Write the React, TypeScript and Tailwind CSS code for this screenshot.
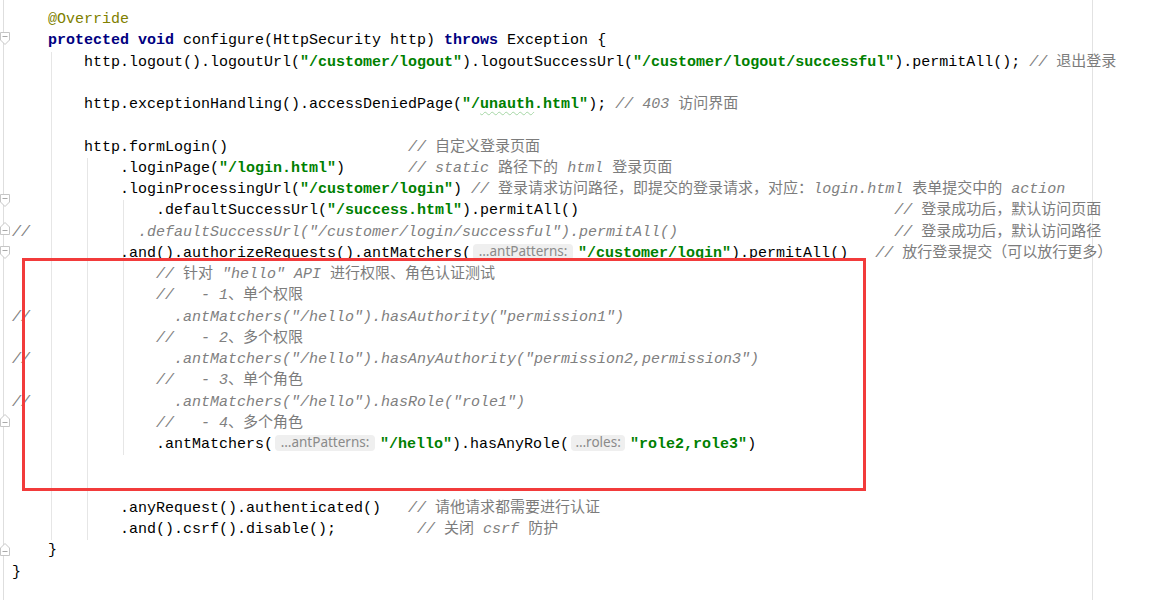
import React from 'react'

type Seg = [string, string, number?]

const CJK = /([\u3000-\u303f\u4e00-\u9fff\uff00-\uffef]+)/

const LINES: Seg[][] = [
  [['p', '    '], ['a', '@Override']],
  [['p', '    '], ['k', 'protected void'], ['p', ' configure(HttpSecurity http) '], ['k', 'throws'], ['p', ' Exception {']],
  [['p', '        http.logout().logoutUrl('], ['s', '"/customer/logout"'], ['p', ').logoutSuccessUrl('], ['s', '"/customer/logout/successful"'], ['p', ').permitAll(); '], ['c', '// 退出登录']],
  [],
  [['p', '        http.exceptionHandling().accessDeniedPage('], ['s', '"/'], ['u', 'unauth'], ['s', '.html"'], ['p', '); '], ['c', '// 403 访问界面']],
  [],
  [['p', '        http.formLogin()                    '], ['c', '// 自定义登录页面']],
  [['p', '            .loginPage('], ['s', '"/login.html"'], ['p', ')       '], ['c', '// static 路径下的 html 登录页面']],
  [['p', '            .loginProcessingUrl('], ['s', '"/customer/login"'], ['p', ') '], ['c', '// 登录请求访问路径，即提交的登录请求，对应：login.html 表单提交中的 action']],
  [['p', '                .defaultSuccessUrl('], ['s', '"/success.html"'], ['p', ').permitAll()                                   '], ['c', '// 登录成功后，默认访问页面']],
  [['c', '//            .defaultSuccessUrl("/customer/login/successful").permitAll()                        // 登录成功后，默认访问路径']],
  [['p', '            .and().authorizeRequests().antMatchers('], ['h', '…antPatterns:', 100], ['s', '"/customer/login"'], ['p', ').permitAll()   '], ['c', '// 放行登录提交（可以放行更多）']],
  [['p', '                '], ['c', '// 针对 "hello" API 进行权限、角色认证测试']],
  [['p', '                '], ['c', '//   - 1、单个权限']],
  [['c', '//                .antMatchers("/hello").hasAuthority("permission1")']],
  [['p', '                '], ['c', '//   - 2、多个权限']],
  [['c', '//                .antMatchers("/hello").hasAnyAuthority("permission2,permission3")']],
  [['p', '                '], ['c', '//   - 3、单个角色']],
  [['c', '//                .antMatchers("/hello").hasRole("role1")']],
  [['p', '                '], ['c', '//   - 4、多个角色']],
  [['p', '                .antMatchers('], ['h', '…antPatterns:', 100], ['s', '"/hello"'], ['p', ').hasAnyRole('], ['h', '…roles:', 54], ['s', '"role2,role3"'], ['p', ')']],
  [],
  [],
  [['p', '            .anyRequest().authenticated()   '], ['c', '// 请他请求都需要进行认证']],
  [['p', '            .and().csrf().disable();         '], ['c', '// 关闭 csrf 防护']],
  [['p', '    }']],
  [['p', '}']],
]

// gutter fold markers: row index -> [direction, offset class]
const FOLDS: Record<number, [string, string]> = {
  1: ['down', 'mt-[2px]'],
  8: ['down', 'mt-[15px]'],
  10: ['up', 'mt-0'],
  11: ['down', 'mt-[3px]'],
  19: ['up', 'mt-[1px]'],
  25: ['up', 'mt-[3px]'],
}

function Comment({ text }: { text: string }) {
  const parts = text.split(CJK)
  return (
    <>
      {parts.map((part, i) =>
        i % 2 === 1 ? (
          <span key={i} className="not-italic leading-none text-[15px] text-[#7c7c7c] font-['Noto_Sans_CJK_SC',sans-serif]">
            {part}
          </span>
        ) : (
          <span key={i} className="italic text-[#808080]">{part}</span>
        )
      )}
    </>
  )
}

function Hint({ text, width }: { text: string; width: number }) {
  return (
    <span
      className="inline-flex align-top mt-[1px] ml-[2px] mr-[5px] h-[16px] items-center justify-center rounded-[4px] bg-[#efefef] text-[#8a8a8a] text-[13.5px] leading-none font-['Noto_Sans',sans-serif] not-italic font-normal"
      style={{ width }}
    >
      {text}
    </span>
  )
}

function Segment({ seg }: { seg: Seg }) {
  const [type, text, width] = seg
  if (type === 'k') return <span className="font-bold text-[#000080]">{text}</span>
  if (type === 's') return <span className="font-bold text-[#008000]">{text}</span>
  if (type === 'u')
    return (
      <span className="font-bold text-[#008000] underline decoration-wavy decoration-[#a5d6a5] decoration-1 underline-offset-[3px]">
        {text}
      </span>
    )
  if (type === 'a') return <span className="text-[#808000]">{text}</span>
  if (type === 'c') return <Comment text={text} />
  if (type === 'h') return <Hint text={text} width={width ?? 100} />
  return <span className="text-black">{text}</span>
}

function Fold({ up, className }: { up?: boolean; className: string }) {
  return (
    <svg width="10" height="13" viewBox="0 0 10 13" className={`shrink-0 ${className}`}>
      {up ? (
        <>
          <path d="M0.5 12.5H9.5V5L5 0.5L0.5 5Z" fill="#fff" stroke="#c6c6c6" />
          <path d="M2.5 8.5H7.5" stroke="#a9a9a9" />
        </>
      ) : (
        <>
          <path d="M0.5 0.5H9.5V8L5 12.5L0.5 8Z" fill="#fff" stroke="#c6c6c6" />
          <path d="M2.5 4.5H7.5" stroke="#a9a9a9" />
        </>
      )}
    </svg>
  )
}

function Rows({ from, to }: { from: number; to: number }) {
  return (
    <>
      {LINES.slice(from, to + 1).map((line, i) => (
        <div key={from + i} className="h-[21.25px] whitespace-pre">
          {line.map((seg, j) => (
            <Segment key={j} seg={seg} />
          ))}
        </div>
      ))}
    </>
  )
}

export default function App() {
  return (
    <div className="relative w-[1165px] h-[600px] bg-white overflow-hidden flex bg-[linear-gradient(90deg,transparent_1092px,#e2e2e2_1092px,#e2e2e2_1093px,transparent_1093px)]">
      {/* gutter */}
      <div className="w-[12px] h-full shrink-0 flex flex-col pt-[9px] bg-[linear-gradient(90deg,transparent_3px,#dedede_3px,#dedede_4px,transparent_4px)]">
        {LINES.map((_, i) => (
          <div key={i} className="h-[21.25px] shrink-0 flex items-start">
            {FOLDS[i] && <Fold up={FOLDS[i][0] === 'up'} className={FOLDS[i][1]} />}
          </div>
        ))}
      </div>

      {/* code, with nested blocks drawing the indent guides */}
      <div className="flex flex-col pt-[9px] text-[15px] leading-[21.25px] font-['Liberation_Mono','Courier_New',monospace]">
        <Rows from={0} to={1} />
        <div className="bg-[linear-gradient(90deg,transparent_39px,#e6e6e6_39px,#e6e6e6_40px,transparent_40px)]">
          <Rows from={2} to={6} />
          <div className="bg-[linear-gradient(90deg,transparent_75px,#e6e6e6_75px,#e6e6e6_76px,transparent_76px)]">
            <Rows from={7} to={8} />
            <div className="bg-[linear-gradient(90deg,transparent_111px,#e6e6e6_111px,#e6e6e6_112px,transparent_112px)]">
              <Rows from={9} to={20} />
            </div>
            <Rows from={21} to={24} />
          </div>
        </div>
        <Rows from={25} to={26} />
      </div>

      {/* red annotation drawn over the screenshot */}
      <div className="absolute left-[22px] top-[258px] w-[844px] h-[233px] border-[3px] border-[#f23b3b]" />
    </div>
  )
}
